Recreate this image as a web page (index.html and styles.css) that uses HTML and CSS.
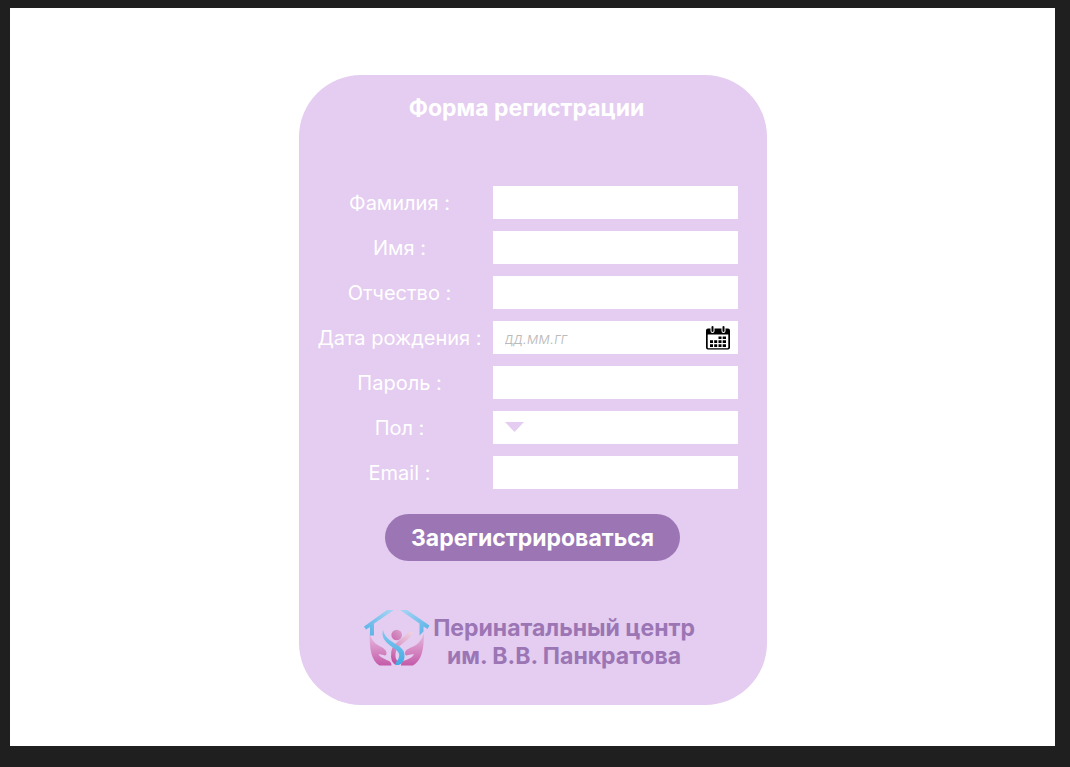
FILE: index.html
```html
<!DOCTYPE html>
<html lang="ru">
<head>
<meta charset="utf-8">
<meta name="viewport" content="width=device-width, initial-scale=1">
<title>Форма регистрации</title>
<link rel="stylesheet" href="styles.css">
</head>
<body>
<main class="page">
  <form class="card">
    <h1 class="title">Форма регистрации</h1>
    <div class="fields">
      <label class="label" for="surname">Фамилия :</label>
      <input class="control" id="surname" type="text">
      <label class="label" for="name">Имя :</label>
      <input class="control" id="name" type="text">
      <label class="label" for="patronymic">Отчество :</label>
      <input class="control" id="patronymic" type="text">
      <label class="label" for="birth">Дата рождения :</label>
      <div class="date">
        <input class="control date-input" id="birth" type="text" placeholder="дд.мм.гг">
        <button class="date-button" type="button" aria-label="Открыть календарь">
          <svg class="calendar" viewBox="0 0 24 24" aria-hidden="true">
            <path d="M2 2.500h2.500v2.500a2 2 0 0 0 4 0v-2.500h7v2.500a2 2 0 0 0 4 0v-2.500h2.500a2 2 0 0 1 2 2v17a2 2 0 0 1-2 2h-20a2 2 0 0 1-2-2v-17a2 2 0 0 1 2-2zM1.700 8.500v13q0 .7.700.7h19.200q.7 0 .7-.7v-13z" fill-rule="evenodd"/>
            <rect x="5.500" y="0" width="2" height="6" rx="1"/>
            <rect x="16.500" y="0" width="2" height="6" rx="1"/>
            <path d="M12.500 10.500h3v2.500h-3zM16.700 10.500h3.300v2.500h-3.300zM4 14.300h3v2.700h-3zM8.200 14.300h3v2.700h-3zM12.500 14.300h3v2.700h-3zM16.700 14.300h3.300v2.700h-3.300zM4 18.300h3v2.700h-3zM8.200 18.300h3v2.700h-3zM12.500 18.300h3v2.700h-3zM16.700 18.300h3.300v2.700h-3.300z"/>
          </svg>
        </button>
      </div>
      <label class="label" for="password">Пароль :</label>
      <input class="control" id="password" type="password">
      <label class="label" for="sex">Пол :</label>
      <div class="select">
        <select class="control" id="sex">
          <option value=""></option>
          <option>Женский</option>
          <option>Мужской</option>
        </select>
        <svg class="arrow" viewBox="0 0 19 10" aria-hidden="true"><path d="M0 0h19l-9.500 10z"/></svg>
      </div>
      <label class="label" for="email">Email :</label>
      <input class="control" id="email" type="email">
    </div>
    <button class="submit" type="submit">Зарегистрироваться</button>
    <footer class="brand">
      <svg class="logo" viewBox="0 0 66 56" aria-hidden="true">
        <defs>
          <linearGradient id="roof-left" x1="0" y1="1" x2="1" y2="0"><stop offset="0" stop-color="#52b0e6"/><stop offset="1" stop-color="#a9d5f4"/></linearGradient>
          <linearGradient id="roof-right" x1="1" y1="1" x2="0" y2="0"><stop offset="0" stop-color="#52b0e6"/><stop offset="1" stop-color="#a9d5f4"/></linearGradient>
          <linearGradient id="hand" x1="0" y1="0" x2="0" y2="1"><stop offset="0" stop-color="#e6c3e5"/><stop offset=".5" stop-color="#d78fc6"/><stop offset="1" stop-color="#c45aa8"/></linearGradient>
          <linearGradient id="head" x1="0" y1="1" x2="1" y2="0"><stop offset="0" stop-color="#c968ae"/><stop offset="1" stop-color="#dba3cc"/></linearGradient>
          <linearGradient id="arm" gradientUnits="userSpaceOnUse" x1="47" y1="22" x2="28" y2="50"><stop offset="0" stop-color="#eed2df"/><stop offset=".5" stop-color="#dda0ca"/><stop offset="1" stop-color="#c154a4"/></linearGradient>
          <linearGradient id="ribbon" x1="0" y1="0" x2="0" y2="1"><stop offset="0" stop-color="#83c9ef"/><stop offset="1" stop-color="#43aae3"/></linearGradient>
        </defs>
        <path d="M5.500 22c1 6 4 11 10 14 4 2 7 4 7 7 0 2-1 3-3 2l-5-1c1 3 5 4 8 6 4 1 5 3 5 5.500h-12c-8-5-10-15-10-33.500z" fill="url(#hand)"/>
        <path d="M60 21c-1 7-4 11-8 14-5 3-11 4-11 8 0 2 1 3 3 2l6-1c-1 3-4 4-8 6-4 1-5 3-5 5.500h12c8-5 11-13 11-34.500z" fill="url(#hand)"/>
        <path d="M23 0h7l-20 13.500v12h-4v-8.500l-4 2.500-2-3z" fill="url(#roof-left)"/>
        <path d="M36 0h7l22.500 15.500-2 3.500-4-2.500v5l-4 4v-12z" fill="url(#roof-right)"/>
        <path d="M47 22c-3 8-16 10-17.500 20-.8 6 0 10 4 11" fill="none" stroke="url(#arm)" stroke-width="4.500"/>
        <circle cx="32.700" cy="25" r="5.300" fill="url(#head)"/>
        <path d="M19 20c-2 7 2 12 9 17 6 4 8 6 7 10-.5 3-3 3.500-3.500 8 5 .8 9-3 9-9 .4-6-4-9-9-12-6-4-11-7-12.500-14z" fill="url(#ribbon)"/>
      </svg>
      <p class="brand-name">Перинатальный центр<br>им. В.В. Панкратова</p>
    </footer>
  </form>
</main>
</body>
</html>
```
FILE: styles.css
```css
* {
  box-sizing: border-box;
}

body {
  margin: 0;
  min-height: 100vh;
  display: flex;
  padding: 8px 15px 21px 10px;
  background: #1f1f1f;
  font-family: Inter, "Liberation Sans", sans-serif;
}

.page {
  flex: 1;
  display: flex;
  flex-direction: column;
  align-items: center;
  padding: 67px 16px 41px;
  background: #fff;
}

.card {
  width: 100%;
  max-width: 468px;
  display: flex;
  flex-direction: column;
  align-items: center;
  padding: 18px 0 35px;
  border-radius: 62px;
  background: #e4cdf0;
}

.title {
  align-self: stretch;
  margin: 0 0 63px;
  padding: 0 29px 0 17px;
  color: #fff;
  font-size: 23px;
  font-weight: 700;
  line-height: 30px;
  text-align: center;
}

.fields {
  align-self: stretch;
  display: grid;
  grid-template-columns: 168px 1fr;
  gap: 12px 9px;
  padding: 0 29px 0 17px;
}

.label {
  height: 33px;
  color: #fff;
  font-size: 20px;
  font-weight: 400;
  line-height: 34px;
  text-align: center;
}

.control {
  width: 100%;
  min-width: 0;
  height: 33px;
  padding: 0 12px;
  border: 0;
  border-radius: 0;
  background: #fff;
  color: #333;
  font-family: inherit;
  font-size: 16px;
}

.date {
  display: flex;
  background: #fff;
}

.date-input {
  flex: 1;
}

.date-input::placeholder {
  color: #bbb;
  font-size: 15px;
  font-style: italic;
  font-weight: 300;
  opacity: 1;
}

.date-button {
  display: flex;
  align-items: center;
  padding: 0 8px 0 0;
  border: 0;
  background: none;
}

.calendar {
  width: 24px;
  height: 24px;
}

.select {
  position: relative;
}

.select .control {
  display: block;
  appearance: none;
  padding-left: 40px;
}

.arrow {
  position: absolute;
  top: 11px;
  left: 12px;
  width: 19px;
  height: 10px;
  fill: #e4cdf0;
  pointer-events: none;
}

.submit {
  height: 47px;
  margin-top: 25px;
  padding: 0 26px;
  border: 0;
  border-radius: 24px;
  background: #9b75b4;
  color: #fff;
  font-family: inherit;
  font-size: 23px;
  font-weight: 700;
}

.brand {
  display: flex;
  align-items: flex-start;
  gap: 3px;
  margin-top: 49px;
  padding-right: 6px;
}

.logo {
  width: 66px;
  height: 56px;
}

.brand-name {
  margin: 4px 0 0;
  color: #9b75b4;
  font-size: 23px;
  font-weight: 700;
  line-height: 28px;
  text-align: center;
}
```
